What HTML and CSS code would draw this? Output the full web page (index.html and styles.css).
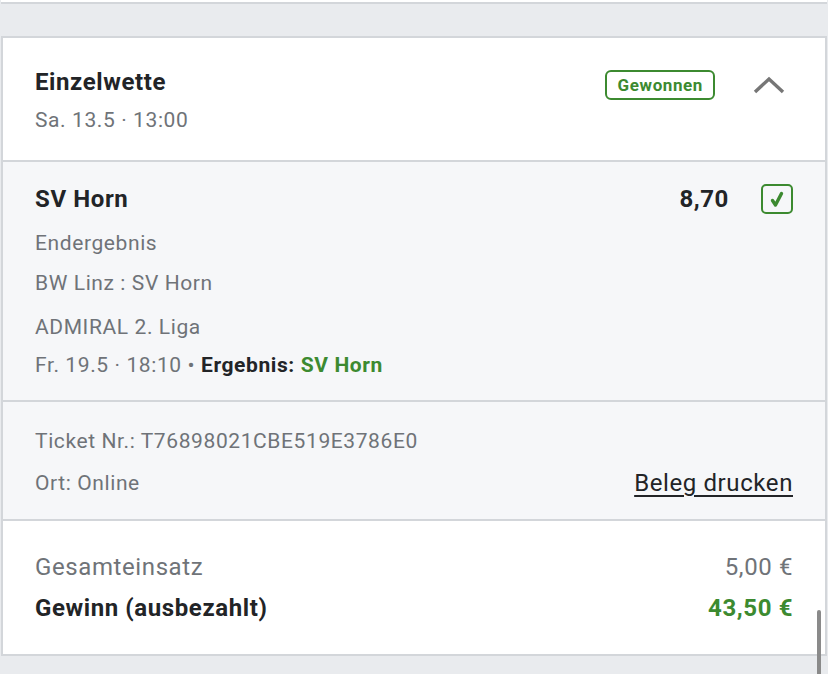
FILE: index.html
```html
<!DOCTYPE html>
<html lang="de">
<head>
  <meta charset="UTF-8">
  <title>Einzelwette</title>
  <link rel="stylesheet" href="styles.css">
</head>
<body>
  <div class="prev-card"></div>

  <div class="bet-card">
    <div class="bet-head">
      <div>
        <div class="bet-title">Einzelwette</div>
        <div class="bet-date">Sa. 13.5 · 13:00</div>
      </div>
      <div class="head-right">
        <span class="badge">Gewonnen</span>
        <svg class="chevron" width="32" height="18" viewBox="0 0 32 18">
          <path d="M2 16 L16 3 L30 16" fill="none" stroke="#767676" stroke-width="3.4"/>
        </svg>
      </div>
    </div>

    <div class="selection">
      <div class="sel-top">
        <div class="sel-name">SV Horn</div>
        <div class="sel-odds">
          <span>8,70</span>
          <span class="check">
            <svg width="18" height="18" viewBox="0 0 18 18">
              <path d="M4.5 10.5 L7.5 15 L13.5 3.5" fill="none" stroke="#3c8a30" stroke-width="3.4" stroke-linecap="round" stroke-linejoin="round"/>
            </svg>
          </span>
        </div>
      </div>
      <div class="sel-line market">Endergebnis</div>
      <div class="sel-line event">BW Linz : SV Horn</div>
      <div class="sel-line league">ADMIRAL 2. Liga</div>
      <div class="sel-line result">Fr. 19.5 · 18:10 • <b>Ergebnis:</b> <b class="green">SV Horn</b></div>
    </div>

    <div class="ticket">
      <div class="ticket-line">Ticket Nr.: T76898021CBE519E3786E0</div>
      <div class="ticket-row">
        <span class="ticket-line">Ort: Online</span>
        <a class="print" href="#">Beleg drucken</a>
      </div>
    </div>

    <div class="totals">
      <div class="tot-row">
        <span>Gesamteinsatz</span>
        <span>5,00 €</span>
      </div>
      <div class="tot-row win">
        <span>Gewinn (ausbezahlt)</span>
        <span class="green">43,50 €</span>
      </div>
    </div>
  </div>

  <div class="scrollbar"></div>
</body>
</html>
```

FILE: styles.css
```css
body {
  margin: 0;
  background-color: #e9ebee;
  font-family: Roboto, 'Liberation Sans', sans-serif;
  color: #222427;
  letter-spacing: 0.6px;
  height: 674px;
  overflow: hidden;
  position: relative;
}

.prev-card {
  height: 2px;
  background: #fff;
  border-bottom: 2px solid #d3d6da;
  margin: 0 1px;
}

.bet-card {
  margin: 32px 1px 0 1px;
  border: 2px solid #d3d6da;
  background: #fff;
}

.bet-head {
  display: flex;
  justify-content: space-between;
  align-items: flex-start;
  padding: 29px 32px 26px 32px;
  border-bottom: 2px solid #d3d6da;
}

.bet-title {
  font-size: 24px;
  font-weight: bold;
  line-height: 30px;
}

.bet-date {
  font-size: 21px;
  color: #6f7378;
  line-height: 28px;
  margin-top: 9px;
}

.head-right {
  display: flex;
  align-items: center;
  gap: 38px;
  margin-top: 3px;
}

.badge {
  border: 2px solid #3c8a30;
  border-radius: 6px;
  color: #3c8a30;
  font-weight: bold;
  font-size: 17px;
  padding: 2px 10px 2px 11px;
  line-height: 22px;
  letter-spacing: 0.6px;
}

.chevron {
  margin-right: 8px;
}

.selection {
  background: #f6f7f9;
  padding: 22px 32px 21px 32px;
  border-bottom: 2px solid #d3d6da;
}

.sel-top {
  display: flex;
  justify-content: space-between;
  align-items: center;
}

.sel-name,
.sel-odds {
  font-size: 24px;
  font-weight: bold;
}

.sel-odds {
  display: flex;
  align-items: center;
  gap: 32px;
}

.check {
  width: 28px;
  height: 26px;
  border: 2px solid #3c8a30;
  border-radius: 5px;
  display: flex;
  align-items: center;
  justify-content: center;
}

.sel-line {
  font-size: 21px;
  color: #6f7378;
  line-height: 28px;
}

.sel-line.market { margin-top: 15px; }
.sel-line.event { margin-top: 12px; }
.sel-line.league { margin-top: 16px; }
.sel-line.result { margin-top: 10px; }

.sel-line b {
  color: #222427;
}

.green {
  color: #3c8a30 !important;
}

.ticket {
  background: #f6f7f9;
  padding: 25px 32px 22px 32px;
  border-bottom: 2px solid #d3d6da;
}

.ticket-line {
  font-size: 21px;
  color: #6f7378;
  line-height: 28px;
}

.ticket-row {
  display: flex;
  justify-content: space-between;
  align-items: center;
  margin-top: 14px;
}

.print {
  font-size: 24px;
  color: #222427;
  text-decoration: underline;
  text-underline-offset: 4px;
}

.totals {
  padding: 30px 32px 30px 32px;
}

.tot-row {
  display: flex;
  justify-content: space-between;
  font-size: 24px;
  line-height: 32px;
  color: #6f7378;
}

.tot-row.win {
  font-weight: bold;
  color: #222427;
  margin-top: 9px;
}

.scrollbar {
  position: absolute;
  right: 7px;
  top: 610px;
  width: 4px;
  height: 70px;
  border-radius: 2px;
  background: #8a8a8a;
}
```
